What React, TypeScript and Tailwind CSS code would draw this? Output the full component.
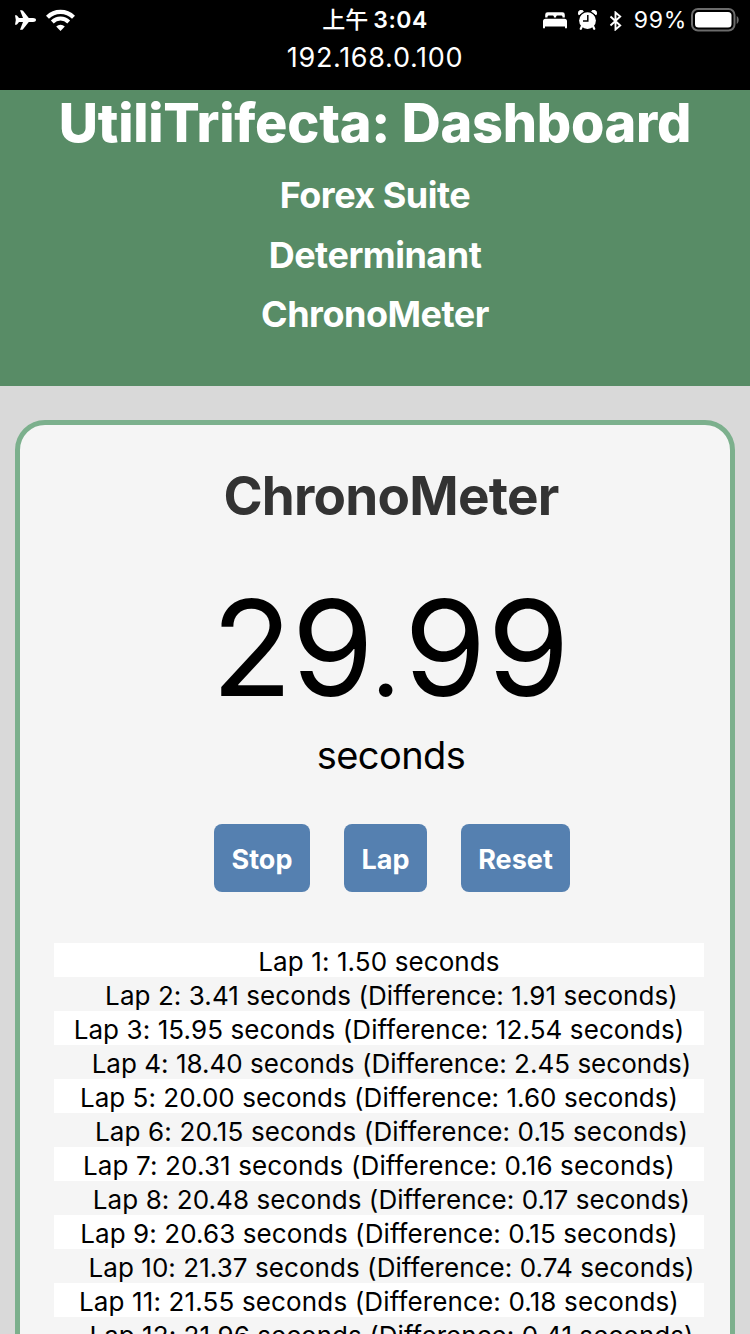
import React from "react";

type Lap = { total: string; diff?: string; tracking: string };

const laps: Lap[] = [
  { total: "1.50", tracking: "tracking-[0.1px]" },
  { total: "3.41", diff: "1.91", tracking: "tracking-[0.07px]" },
  { total: "15.95", diff: "12.54", tracking: "tracking-[0.09px]" },
  { total: "18.40", diff: "2.45", tracking: "tracking-[0.02px]" },
  { total: "20.00", diff: "1.60", tracking: "tracking-[0.04px]" },
  { total: "20.15", diff: "0.15", tracking: "tracking-[0.15px]" },
  { total: "20.31", diff: "0.16", tracking: "tracking-[0.13px]" },
  { total: "20.48", diff: "0.17", tracking: "tracking-[0.08px]" },
  { total: "20.63", diff: "0.15", tracking: "tracking-[0.09px]" },
  { total: "21.37", diff: "0.74", tracking: "tracking-[0.06px]" },
  { total: "21.55", diff: "0.18", tracking: "tracking-[0.14px]" },
  { total: "21.96", diff: "0.41", tracking: "tracking-[0.05px]" },
];

function StatusBar() {
  return (
    <div className="h-[90px] shrink-0 bg-black text-white">
      <div className="grid h-[41px] grid-cols-[1fr_auto_1fr] items-center">
        <div className="flex items-center gap-[10px] pl-[15px]">
          <svg className="-mt-[1px]" width="21" height="20" viewBox="0 0 21 20" fill="#fff">
            <path d="M21 10c0-1.200-1.200-1.900-3-1.900h-4.200L8 .8C7.700.4 7.200.2 6.700.2H5l3 7.900H4L2.200 5.700C2 5.400 1.700 5.200 1.300 5.200H0L.8 10 0 14.800h1.300c.4 0 .7-.2.900-.5L4 11.900h4L5 19.800h1.700c.5 0 1-.2 1.300-.6l5.800-7.300H18c1.800 0 3-.7 3-1.900z" />
          </svg>
          <svg className="-mt-[1px]" width="29" height="22" viewBox="0 0 29 22" fill="none" stroke="#fff">
            <path d="M1.500 8.200a18.400 18.400 0 0 1 26 0" strokeWidth="4.200" />
            <path d="M6.300 13a11.600 11.600 0 0 1 16.400 0" strokeWidth="4" />
            <path d="M14.500 22l-4.300-4.400a6 6 0 0 1 8.600 0z" fill="#fff" stroke="none" />
          </svg>
        </div>
        <div className="flex items-center gap-[5px] text-[23px] leading-[41px] font-semibold">
          <span className="font-medium">上午</span>
          <span className="tracking-[0.5px]">3:04</span>
        </div>
        <div className="flex items-center justify-end pr-[11px]">
          <svg className="mr-[11px]" width="24" height="17" viewBox="0 0 24 17" fill="#fff">
            <path d="M2.200 5.600V2.700A2.400 2.400 0 0 1 4.600.3h14.800a2.400 2.400 0 0 1 2.400 2.400v2.900h-2.300V4.900c0-1-.5-1.500-1.500-1.500h-3.400c-1 0-1.500.5-1.500 1.500v.7h-2.200v-.7c0-1-.5-1.500-1.500-1.500H6c-1 0-1.500.5-1.500 1.500v.7z" />
            <path d="M0 9.200a2.500 2.500 0 0 1 2.500-2.500h19A2.500 2.500 0 0 1 24 9.200v6.400c0 .5-.3.800-.8.800h-.400c-.5 0-.8-.3-.8-.8v-1H2v1c0 .5-.3.800-.8.800H.8c-.5 0-.8-.3-.8-.8z" />
          </svg>
          <svg className="-mt-[1px] mr-[12px]" width="19" height="20" viewBox="0 0 19 20">
            <path d="M3.800 16.500L2.800 18.800M15.200 16.500l1 2.300" stroke="#fff" strokeWidth="2.200" strokeLinecap="round" />
            <circle cx="9.500" cy="10.600" r="8.400" fill="#fff" />
            <path d="M.9 4.800A2.700 2.700 0 0 1 5.400 1.400zM18.100 4.800a2.700 2.700 0 0 0-4.500-3.400z" fill="#fff" stroke="#fff" strokeWidth="1" />
            <path d="M1.500 6.300A9 9 0 0 1 6.600 2.100M17.500 6.300a9 9 0 0 0-5.100-4.200" stroke="#000" strokeWidth="0.600" fill="none" />
            <path d="M9.800 5v6H5" stroke="#000" strokeWidth="1.500" fill="none" />
          </svg>
          <svg className="mt-[1px] mr-[12px]" width="13" height="20" viewBox="0 0 13 20" fill="none" stroke="#fff" strokeWidth="1.900">
            <path d="M1.500 5.500l9.700 9L6.500 18.500V1.500l4.700 4L1.500 14.500" />
          </svg>
          <span className="mr-[4px] text-[23px] leading-[41px] tracking-[0.7px]">99%</span>
          <svg className="-mt-[1px]" width="48" height="24" viewBox="0 0 48 24">
            <rect x="1" y="1" width="42.500" height="21.500" rx="6" fill="none" stroke="#6b6b6b" strokeWidth="2" />
            <rect x="4" y="4" width="36.500" height="15.500" rx="3.500" fill="#fff" />
            <path d="M45.700 8v8c1.300-.7 2-2.300 2-4s-.7-3.300-2-4z" fill="#6b6b6b" />
          </svg>
        </div>
      </div>
      <div className="text-center text-[27px] leading-[34px] tracking-[0.7px]">192.168.0.100</div>
    </div>
  );
}

function Header() {
  return (
    <header className="flex h-[296px] shrink-0 flex-col items-center bg-[#588c66] text-white">
      <h1 className="h-[76px] text-[54px] leading-[66px] font-extrabold tracking-[-0.25px] whitespace-nowrap">UtiliTrifecta: Dashboard</h1>
      <nav className="flex flex-col items-center text-[36px] leading-[59.6px] font-bold tracking-[-0.5px]">
        <a>Forex Suite</a>
        <a>Determinant</a>
        <a>ChronoMeter</a>
      </nav>
    </header>
  );
}

function LapRow({ lap, index }: { lap: Lap; index: number }) {
  const text = `Lap ${index + 1}: ${lap.total} seconds${lap.diff ? ` (Difference: ${lap.diff} seconds)` : ""}`;
  const tone = index % 2 === 0 ? "bg-white" : "pl-[25px]";
  return (
    <li className={`h-[34px] w-[650px] pt-[2px] text-center text-[26px] leading-[34px] whitespace-nowrap ${tone}`}>
      <span className={lap.tracking}>{text}</span>
    </li>
  );
}

function Button({ label, size }: { label: string; size: string }) {
  return (
    <button className={`h-[68px] rounded-[8px] bg-[#5580b0] pt-[5px] text-[27px] font-bold text-white ${size}`}>{label}</button>
  );
}

export default function App() {
  return (
    <div className="flex h-[1334px] w-[750px] flex-col overflow-hidden bg-[#d9d9d9] font-['Inter','Noto_Sans_CJK_TC',sans-serif] text-black">
      <StatusBar />
      <Header />
      <main className="mx-[15px] mt-[34px] h-[1000px] shrink-0 rounded-[30px] border-[5px] border-[#7cb08d] bg-[#f5f5f5] pl-[34px]">
        <div className="flex w-[674px] flex-col items-center">
          <h2 className="mt-[41px] text-[53px] leading-[60px] font-bold tracking-[-0.75px] text-[#333]">ChronoMeter</h2>
          <div className="mt-[52px] h-[139px] text-[133px] leading-[140px] tracking-[0.9px]">
            <span className="tracking-[-1px]">29</span>
            <span className="-ml-[2px] inline-block w-[33px] pr-[8px] text-center text-[102px] leading-none tracking-normal">.</span>
            99
          </div>
          <div className="mt-[18px] text-[38px] leading-[40px] tracking-[-0.6px]">seconds</div>
          <div className="mt-[49px] flex gap-[34px] pl-[2px]">
            <Button label="Stop" size="w-[96px]" />
            <Button label="Lap" size="w-[83px]" />
            <Button label="Reset" size="w-[109px]" />
          </div>
        </div>
        <ul className="mt-[51px]">
          {laps.map((lap, i) => (
            <LapRow key={i} lap={lap} index={i} />
          ))}
        </ul>
      </main>
    </div>
  );
}
